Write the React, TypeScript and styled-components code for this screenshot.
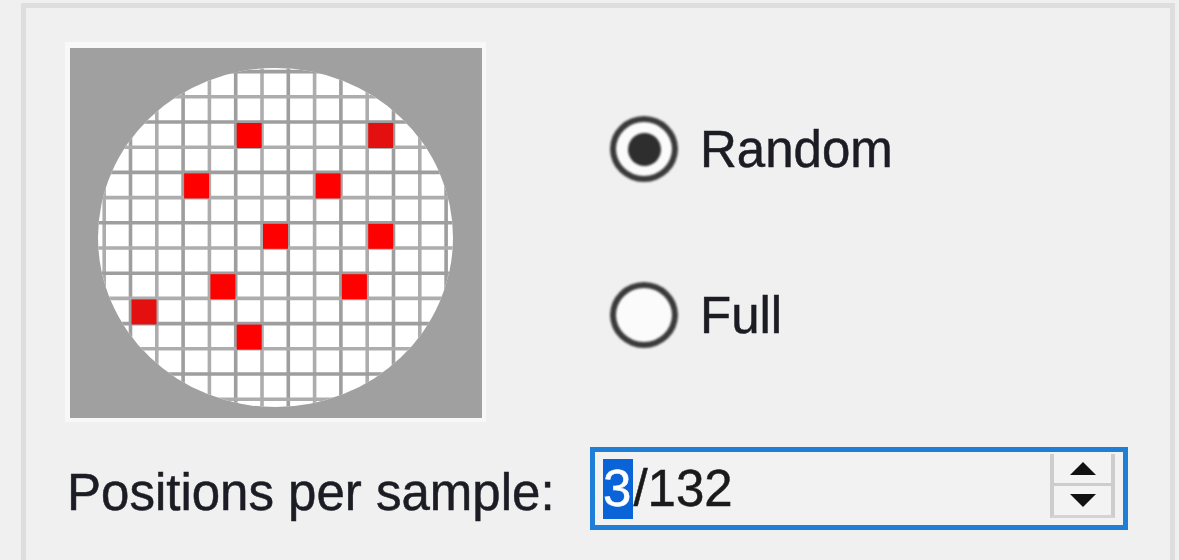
import React from "react";
import styled, { createGlobalStyle } from "styled-components";

const GlobalStyle = createGlobalStyle`
  html, body {
    margin: 0;
    padding: 0;
    background: #f0f0f0;
    overflow: hidden;
  }
  #root {
    width: 1179px;
    height: 560px;
    overflow: hidden;
  }
`;

const GroupBox = styled.section`
  margin: 3px 0 0 21px;
  width: 1154px;
  height: 620px;
  box-sizing: border-box;
  border: 5px solid #dedede;
  border-bottom: none;
  padding: 34px 0 0 39px;
  font-family: "Liberation Sans", Arial, sans-serif;
  color: #1c1c24;
  -webkit-text-stroke: 0.5px #1c1c24;
`;

const TopRow = styled.div`
  display: flex;
  height: 380px;
`;

const ImageFrame = styled.div`
  box-sizing: border-box;
  width: 421px;
  height: 380px;
  padding: 6px 4px 4px 5px;
  background: #f8f8f8;
  display: flex;
  svg {
    display: block;
    filter: blur(0.6px);
  }
`;

const RadioColumn = styled.div`
  margin-left: 124px;
  padding-top: 73px;
  display: flex;
  flex-direction: column;
  gap: 98px;
`;

const RadioRow = styled.label`
  display: flex;
  align-items: center;
  gap: 22px;
  height: 68px;
  font-size: 51px;
`;

const RadioCircle = styled.span<{ $checked?: boolean }>`
  box-sizing: border-box;
  width: 68px;
  height: 66px;
  border-radius: 50%;
  border: 6px solid #3a3a3a;
  background: #fbfbfb;
  display: flex;
  align-items: center;
  justify-content: center;
  filter: blur(0.8px);
  &::after {
    content: "";
    display: ${(p) => (p.$checked ? "block" : "none")};
    width: 33px;
    height: 33px;
    border-radius: 50%;
    background: #2e2e2e;
  }
`;

const BottomRow = styled.div`
  margin-top: 25px;
  display: flex;
  align-items: center;
  padding-left: 2px;
`;

const FieldLabel = styled.span`
  width: 523px;
  font-size: 51px;
  padding-top: 8px;
`;

const SpinBox = styled.div`
  box-sizing: border-box;
  width: 538px;
  height: 83px;
  border: 5px solid #1f7fd6;
  background: #f2f2f2;
  display: flex;
  align-items: flex-start;
  padding-left: 8px;
`;

const SpinText = styled.div`
  flex: 1;
  margin-top: 7px;
  font-size: 51px;
  line-height: 60px;
  height: 60px;
  color: #1a1a1a;
`;

const Selected = styled.span`
  display: inline-block;
  background: #0a64d8;
  color: #ffffff;
  -webkit-text-stroke: 0.5px #ffffff;
  padding-right: 2px;
`;

const SpinButtons = styled.div`
  box-sizing: border-box;
  width: 65px;
  height: 64px;
  margin: 2px 8px 0 0;
  border-left: 4px solid #cdcdcd;
  border-right: 4px solid #cdcdcd;
  border-bottom: 3px solid #d4d4d4;
  display: flex;
  flex-direction: column;
`;

const SpinButton = styled.div<{ $down?: boolean }>`
  flex: 1;
  display: flex;
  align-items: center;
  justify-content: center;
  background: #f3f3f3;
  border-top: ${(p) => (p.$down ? "3px solid #cdcdcd" : "none")};
  &::after {
    content: "";
    width: 0;
    height: 0;
    border-left: 13px solid transparent;
    border-right: 13px solid transparent;
    ${(p) =>
      p.$down
        ? "border-top: 13px solid #111;"
        : "border-bottom: 13px solid #111;"}
    filter: blur(0.5px);
  }
`;

const X0 = 60.5;
const DX = 26.3;
const Y0 = 74;
const DY = 25.2;

const redCells: [number, number][] = [
  [4, 0],
  [9, 0],
  [2, 2],
  [7, 2],
  [5, 4],
  [9, 4],
  [3, 6],
  [8, 6],
  [0, 7],
  [4, 8],
];

const Wafer: React.FC = () => {
  const vLines: number[] = [];
  for (let k = -3; k <= 13; k++) vLines.push(X0 + DX * k);
  const hLines: number[] = [];
  for (let k = -3; k <= 12; k++) hLines.push(Y0 + DY * k);
  return (
    <svg width="412" height="370" viewBox="0 0 412 370">
      <defs>
        <clipPath id="waferClip">
          <ellipse cx="205.5" cy="189.5" rx="177.5" ry="169.5" />
        </clipPath>
      </defs>
      <rect x="0" y="0" width="412" height="370" fill="#a0a0a0" />
      <ellipse cx="205.5" cy="189.5" rx="177.5" ry="169.5" fill="#ffffff" />
      <g clipPath="url(#waferClip)">
        {vLines.map((x, i) => (
          <line
            key={"v" + i}
            x1={x}
            y1={0}
            x2={x}
            y2={370}
            stroke={i % 2 ? "#9e9e9e" : "#adadad"}
            strokeWidth={3.6}
          />
        ))}
        {hLines.map((y, i) => (
          <line
            key={"h" + i}
            x1={0}
            y1={y}
            x2={412}
            y2={y}
            stroke={i % 2 ? "#9e9e9e" : "#adadad"}
            strokeWidth={3.6}
          />
        ))}
        {redCells.map(([c, r], i) => (
          <rect
            key={"r" + i}
            x={X0 + DX * c + 1}
            y={Y0 + DY * r + 1}
            width={25}
            height={25}
            fill={i === 1 || i === 8 ? "#e41010" : "#ff0000"}
          />
        ))}
      </g>
    </svg>
  );
};

export default function App() {
  return (
    <>
      <GlobalStyle />
      <GroupBox>
        <TopRow>
          <ImageFrame>
            <Wafer />
          </ImageFrame>
          <RadioColumn>
            <RadioRow>
              <RadioCircle $checked />
              Random
            </RadioRow>
            <RadioRow>
              <RadioCircle />
              Full
            </RadioRow>
          </RadioColumn>
        </TopRow>
        <BottomRow>
          <FieldLabel>Positions per sample:</FieldLabel>
          <SpinBox>
            <SpinText>
              <Selected>3</Selected>/132
            </SpinText>
            <SpinButtons>
              <SpinButton />
              <SpinButton $down />
            </SpinButtons>
          </SpinBox>
        </BottomRow>
      </GroupBox>
    </>
  );
}
